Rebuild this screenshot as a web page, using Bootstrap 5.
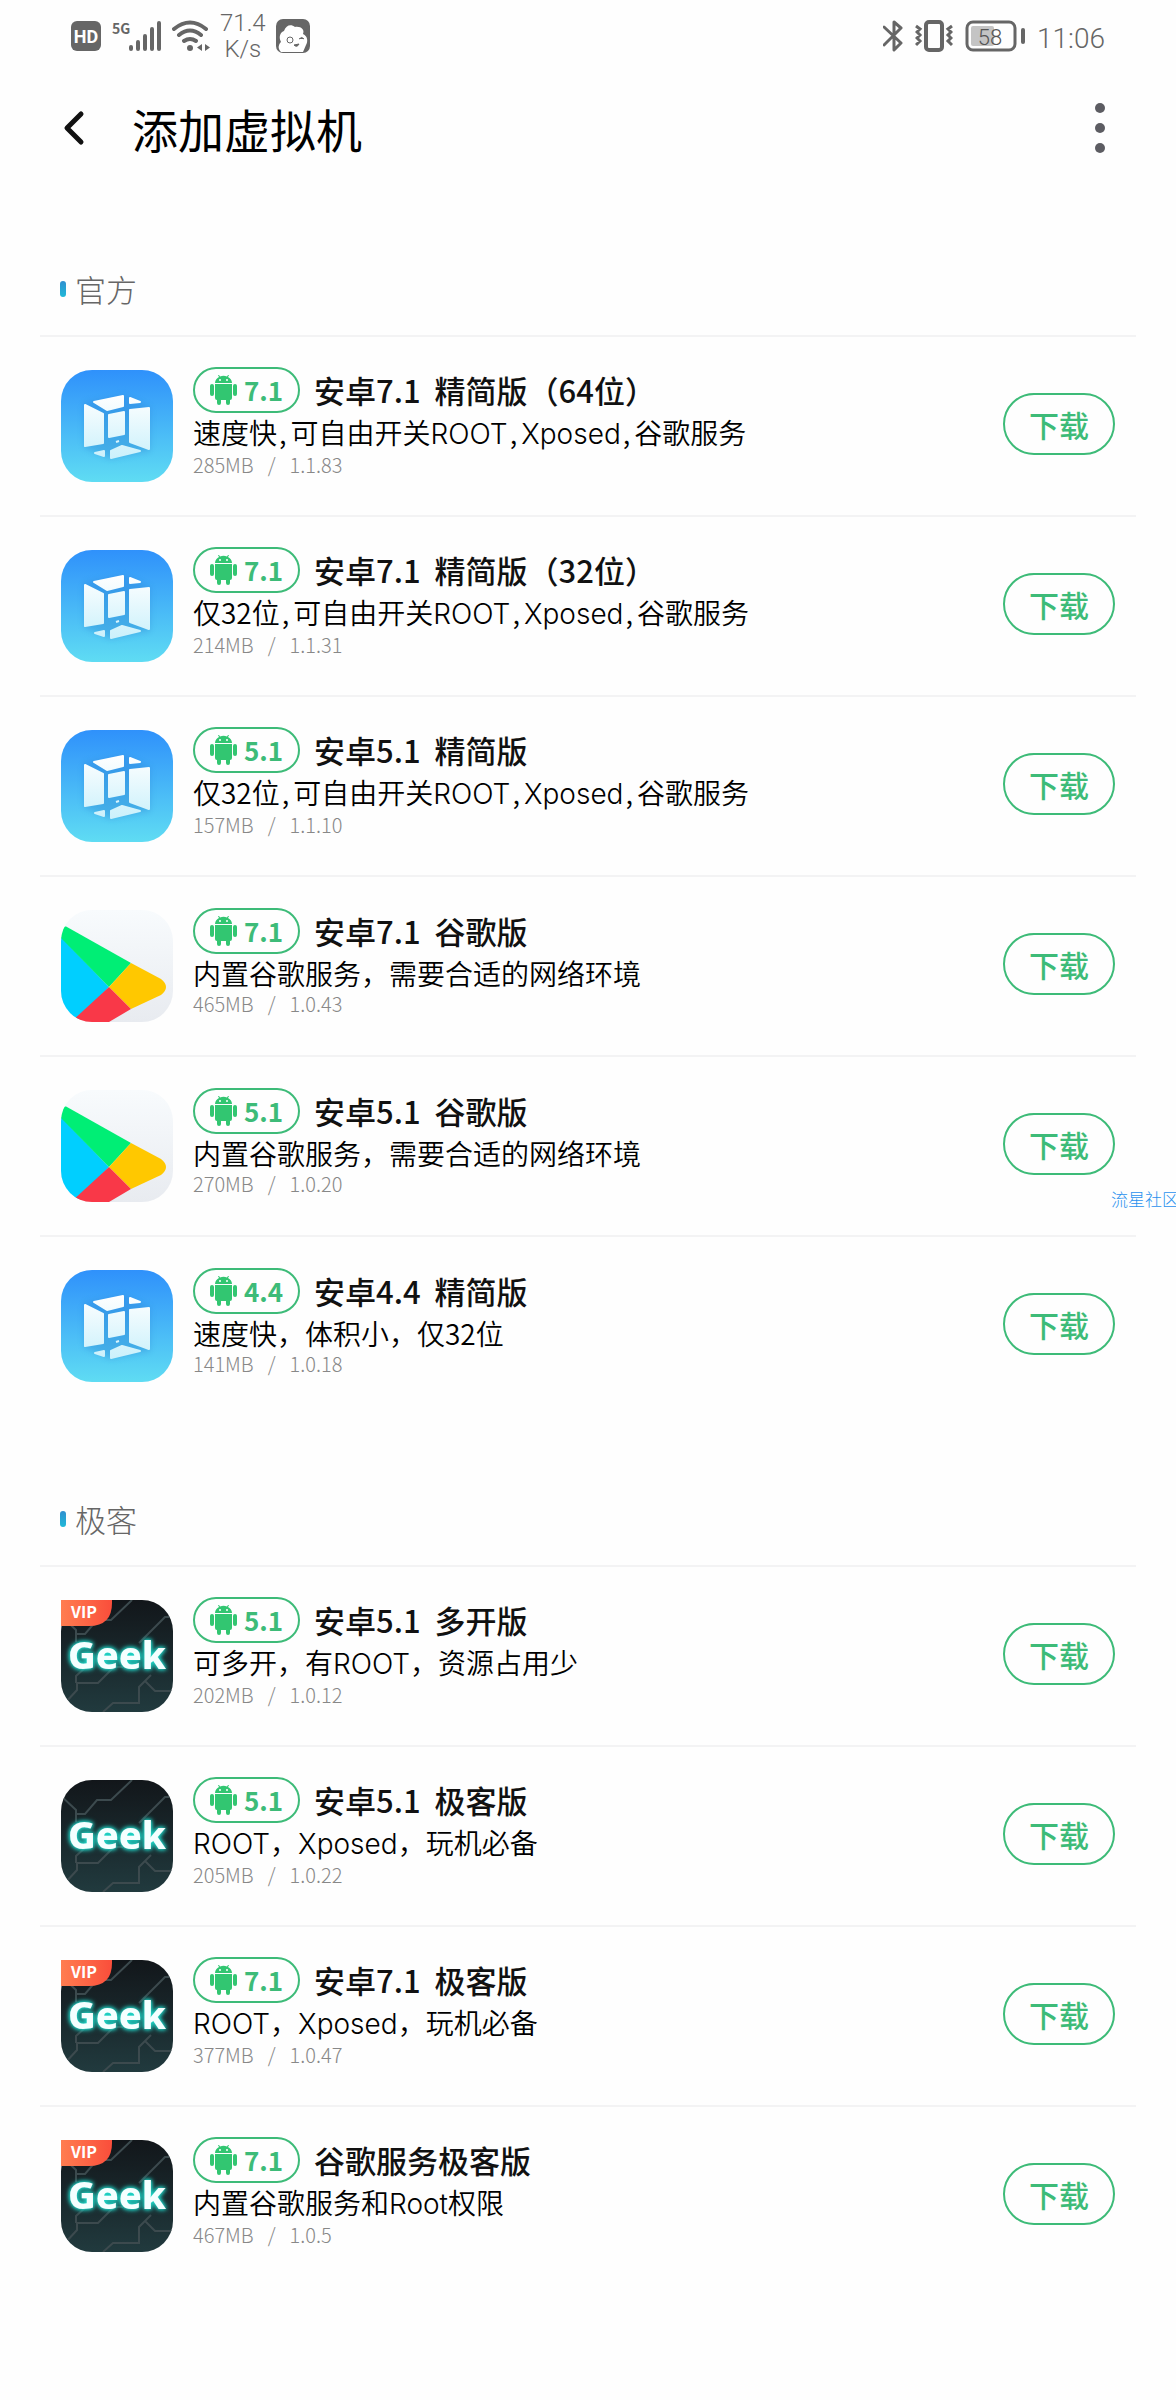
<!DOCTYPE html>
<html lang="zh-CN">
<head>
<meta charset="utf-8">
<meta name="viewport" content="width=device-width, initial-scale=1">
<title>添加虚拟机</title>
<link href="https://cdn.jsdelivr.net/npm/bootstrap@5.3.0/dist/css/bootstrap.min.css" rel="stylesheet">
<style>
:root{--vm-green:#3dbb78;--vm-grey:#666}
body{font-family:"Noto Sans CJK SC","Noto Sans",sans-serif;font-weight:300;color:#111;background:#fefefe;overflow-x:hidden}
svg{display:block;flex:none}
.status-bar{height:72px;padding:0 71px;color:var(--vm-grey);font-family:Roboto,sans-serif}
.status-left{gap:10px}
.status-right{gap:12px}
.net-speed{font-size:24px;line-height:26px}
.clock{font-size:28px;line-height:36px;padding-top:6px}
.app-bar{height:116px;padding:0 60px 4px}
.app-bar h1{font-size:46px;line-height:56px;font-weight:400;color:#000}
.icon-btn{background:none;border:0;padding:0}
.back-btn{width:72px}
.vm-section{padding:0 40px;margin-bottom:60px}
.app-bar + main{padding-top:57px}
.section-title{height:90px;padding:0 20px 2px;gap:9px;font-size:31px;font-weight:300;color:#666}
.section-title::before{content:"";width:6px;height:16px;border-radius:3px;background:linear-gradient(#2f8fd0,#20b9d8)}
.vm-item{height:180px;padding:0 21px;gap:20px;border-top:2px solid #f3f3f4}
.vm-info{padding-bottom:10px}
.vm-head{gap:14px}
.ver-pill{width:107px;height:46px;gap:7px;border:2px solid var(--vm-green);border-radius:23px;color:var(--vm-green);font-size:26px;line-height:42px;font-weight:700}
.vm-title{font-size:31px;line-height:46px;font-weight:500;gap:14px;color:#111}
.vm-desc{font-size:28px;line-height:38px;padding-bottom:2px;font-weight:350;color:#000}
.latin{font-family:Inter,sans-serif;font-weight:300}
.sep{padding:0 4px 0 2px}
.vm-meta{font-size:20px;line-height:20px;gap:14px;color:#888}
.get-btn{width:112px;height:62px;margin-bottom:4px;padding:0;border:2px solid var(--vm-green);border-radius:31px;background:none;color:var(--vm-green);font-size:30px;line-height:56px;font-weight:500}
.watermark{position:absolute;left:calc(100% - 25px);top:132px;font-size:17px;line-height:20px;color:#2a92ee;white-space:nowrap}
.neon{filter:drop-shadow(0 0 2px #1fd6c8) drop-shadow(0 0 2px #1fd6c8)}
</style>
</head>
<body>
<svg width="0" height="0" class="position-absolute" aria-hidden="true">
  <defs>
    <linearGradient id="gSky" x2="0" y2="1"><stop stop-color="#2f91fb"/><stop offset="1" stop-color="#5fdcf3"/></linearGradient>
    <linearGradient id="gPane" gradientUnits="userSpaceOnUse" x1="0" y1="25" x2="0" y2="90"><stop stop-color="#fff"/><stop offset="1" stop-color="#c9f0fb"/></linearGradient>
    <linearGradient id="gPale" x2="0" y2="1"><stop stop-color="#f8fbfd"/><stop offset="1" stop-color="#e8ebf0"/></linearGradient>
    <linearGradient id="gDark" x2="0" y2="1"><stop stop-color="#12161a"/><stop offset="1" stop-color="#213a3e"/></linearGradient>
    <linearGradient id="gVip"><stop stop-color="#ff7d50"/><stop offset="1" stop-color="#fa4e3b"/></linearGradient>
    <clipPath id="cTile"><rect width="112" height="112" rx="31"/></clipPath>
    <filter id="fShade" x="-20%" y="-20%" width="140%" height="140%"><feGaussianBlur stdDeviation="3"/></filter>
  </defs>
  <symbol id="android" viewBox="0 0 27 30">
    <g fill="#32c671"><path d="M5 8C5 5 7 3 9 2L8 0h1l1 1.500a10 10 0 0 1 7 0L18 0h1l-1 2c2 1 4 3 4 6z"/><path d="M5 9h17v14a2 2 0 0 1-2 2v3a2 2 0 0 1-4 0v-3h-5v3a2 2 0 0 1-4 0v-3a2 2 0 0 1-2-2z"/><rect y="9" width="4" height="12" rx="2"/><rect x="23" y="9" width="4" height="12" rx="2"/></g>
    <circle cx="10" cy="5" r="1" fill="#fff"/><circle cx="17" cy="5" r="1" fill="#fff"/>
  </symbol>
  <symbol id="cubes" viewBox="0 0 112 112">
    <rect width="112" height="112" rx="31" fill="url(#gSky)"/>
    <path d="M23 33 62 25 89 37v44L49 89 23 77z" fill="#2577c9" opacity=".3" filter="url(#fShade)"/>
    <g fill="url(#gPane)" stroke="url(#gPane)" stroke-width="2" stroke-linejoin="round"><path d="M33 32 62 26v10L46 40z"/><path d="M69 28 79 32 69 33z"/><path d="M24 35 42 44V73L24 76z"/><path d="M48 45 63 42V64L48 67z"/><path d="M69 40 88 38V79L69 72z"/><path d="M50 81 61 76 79 81 50 88z"/><path d="M34 83 43 81V86z"/><path d="M55 72 58 71"/></g>
  </symbol>
  <symbol id="play" viewBox="0 0 112 112">
    <rect width="112" height="112" rx="31" fill="url(#gPale)"/>
    <g clip-path="url(#cTile)"><path d="M0 27 48 77 15 112H0z" fill="#00cfff"/><path d="M0 28C0 20 2 15 6 17L70 53 48 77z" fill="#00ee75"/><path d="M70 53 100 69q10 8 0 16L70 99 48 77z" fill="#ffc800"/><path d="M48 77 70 99 48 112H10z" fill="#f93848"/></g>
  </symbol>
  <symbol id="geek" viewBox="0 0 112 112">
    <rect width="112" height="112" rx="31" fill="url(#gDark)"/>
    <g fill="none" stroke="#3c4a4e" stroke-width="2" clip-path="url(#cTile)"><path d="M71 0 50 20H36L24 34H15V42M0 16 15 30V42M112 17H104L78 43M62 67 53 67 37 83H16V90L4 103M15 83V76L24 68M42 112 52 103H78V87L90 75M84 81 94 91H112"/></g>
    <text class="neon" x="56" y="69" font-family="Noto Sans,sans-serif" font-weight="800" font-size="38" text-anchor="middle" fill="#f4ffff">Geek</text>
  </symbol>
  <symbol id="vip" viewBox="0 0 112 112">
    <path d="M0 0H51V3Q51 26 28 26H0z" fill="url(#gVip)"/>
    <text x="23" y="18" font-family="Noto Sans CJK SC,sans-serif" font-weight="700" font-size="16" text-anchor="middle" fill="#fff">VIP</text>
  </symbol>
</svg>

<div class="status-bar d-flex justify-content-between align-items-center">
  <div class="status-left d-flex align-items-center">
    <svg width="30" height="30" viewBox="0 0 30 30"><rect width="30" height="30" rx="6" fill="#666"/><text x="15" y="22" text-anchor="middle" font-size="18" font-weight="700" fill="#fff">HD</text></svg>
    <svg width="51" height="32" viewBox="0 0 51 32"><text x="1" y="14" font-family="Noto Sans CJK SC,sans-serif" font-size="14" font-weight="700" fill="#666">5G</text><g stroke="#666" stroke-width="4" stroke-linecap="round"><path d="M20 27v2M27 22v7M34 16v13M41 9v20M48 3v26"/></g></svg>
    <svg width="38" height="32" viewBox="0 0 38 32"><g fill="none" stroke="#666" stroke-width="4" stroke-linecap="round"><path d="M2 9q16-13 32 0M7 15q11-9 22 0M12 21q6-4 12 0"/></g><circle cx="18" cy="28" r="3" fill="#666"/><path d="M30 24v7l-5-3.500zM33 24v7l5-3.500z" fill="#666"/></svg>
    <div class="net-speed text-center">71.4<br>K/s</div>
    <svg width="34" height="34" viewBox="0 0 34 34"><rect width="34" height="34" rx="7" fill="#666"/><path d="M5 33C1 29 3 25 5 23 2 17 5 13 8 12 10 6 15 5 19 8 25 7 29 11 27 15 32 17 32 23 30 26L27 33z" fill="#fff"/><circle cx="14" cy="21" r="3" fill="none" stroke="#666"/><path d="M23 20q3-3 5 0M18 26q3 3 5-1z" fill="#666" stroke="#666"/></svg>
  </div>
  <div class="status-right d-flex align-items-center">
    <svg width="20" height="34" viewBox="0 0 20 34" fill="none" stroke="#666" stroke-width="3" stroke-linejoin="round" stroke-linecap="round"><path d="M1 8 18 24 11 31V3L18 9 1 26"/></svg>
    <svg width="38" height="32" viewBox="0 0 38 32" fill="none" stroke="#666" stroke-width="3"><rect x="11" y="2" width="16" height="28" rx="3" stroke-width="4"/><path d="M1 6 5 9 2 12 5 15 2 18 5 21 1 25M37 6 33 9 36 12 33 15 36 18 33 21 37 25"/></svg>
    <svg width="60" height="32" viewBox="0 0 60 32"><rect x="2" y="2" width="48" height="28" rx="6" fill="none" stroke="#666" stroke-width="3"/><rect x="6" y="6" width="23" height="20" rx="2" fill="#c4c4c4"/><rect x="56" y="8" width="4" height="16" rx="2" fill="#666"/><text x="25" y="25" text-anchor="middle" font-size="22" font-weight="300" fill="#555">58</text></svg>
    <div class="clock">11:06</div>
  </div>
</div>

<header class="app-bar d-flex align-items-center">
  <button class="icon-btn back-btn" type="button" aria-label="返回"><svg width="28" height="36" viewBox="0 0 28 36"><path d="M21 4 7 18 21 32" fill="none" stroke="#111" stroke-width="5" stroke-linecap="round" stroke-linejoin="round"/></svg></button>
  <h1 class="m-0 flex-grow-1">添加虚拟机</h1>
  <button class="icon-btn" type="button" aria-label="更多"><svg width="32" height="52" viewBox="0 0 32 52" fill="#5c5c62"><circle cx="16" cy="6" r="5"/><circle cx="16" cy="26" r="5"/><circle cx="16" cy="46" r="5"/></svg></button>
</header>

<main>
<section class="vm-section">
  <h2 class="section-title d-flex align-items-center m-0">官方</h2>
  <article class="vm-item d-flex align-items-center">
    <svg width="112" height="112"><use href="#cubes"/></svg>
    <div class="vm-info flex-grow-1">
      <div class="vm-head d-flex"><span class="ver-pill d-flex align-items-center justify-content-center"><svg width="27" height="30"><use href="#android"/></svg>7.1</span><div class="vm-title d-flex"><span>安卓7.1</span> <span>精简版（64位）</span></div></div>
      <div class="vm-desc">速度快<span class="sep">,</span>可自由开关<span class="latin">ROOT</span><span class="sep">,</span><span class="latin">Xposed</span><span class="sep">,</span>谷歌服务</div>
      <div class="vm-meta d-flex"><span>285MB</span> <span>/</span> <span>1.1.83</span></div>
    </div>
    <button class="get-btn" type="button">下载</button>
  </article>
  <article class="vm-item d-flex align-items-center">
    <svg width="112" height="112"><use href="#cubes"/></svg>
    <div class="vm-info flex-grow-1">
      <div class="vm-head d-flex"><span class="ver-pill d-flex align-items-center justify-content-center"><svg width="27" height="30"><use href="#android"/></svg>7.1</span><div class="vm-title d-flex"><span>安卓7.1</span> <span>精简版（32位）</span></div></div>
      <div class="vm-desc">仅32位<span class="sep">,</span>可自由开关<span class="latin">ROOT</span><span class="sep">,</span><span class="latin">Xposed</span><span class="sep">,</span>谷歌服务</div>
      <div class="vm-meta d-flex"><span>214MB</span> <span>/</span> <span>1.1.31</span></div>
    </div>
    <button class="get-btn" type="button">下载</button>
  </article>
  <article class="vm-item d-flex align-items-center">
    <svg width="112" height="112"><use href="#cubes"/></svg>
    <div class="vm-info flex-grow-1">
      <div class="vm-head d-flex"><span class="ver-pill d-flex align-items-center justify-content-center"><svg width="27" height="30"><use href="#android"/></svg>5.1</span><div class="vm-title d-flex"><span>安卓5.1</span> <span>精简版</span></div></div>
      <div class="vm-desc">仅32位<span class="sep">,</span>可自由开关<span class="latin">ROOT</span><span class="sep">,</span><span class="latin">Xposed</span><span class="sep">,</span>谷歌服务</div>
      <div class="vm-meta d-flex"><span>157MB</span> <span>/</span> <span>1.1.10</span></div>
    </div>
    <button class="get-btn" type="button">下载</button>
  </article>
  <article class="vm-item d-flex align-items-center">
    <svg width="112" height="112"><use href="#play"/></svg>
    <div class="vm-info flex-grow-1">
      <div class="vm-head d-flex"><span class="ver-pill d-flex align-items-center justify-content-center"><svg width="27" height="30"><use href="#android"/></svg>7.1</span><div class="vm-title d-flex"><span>安卓7.1</span> <span>谷歌版</span></div></div>
      <div class="vm-desc">内置谷歌服务，需要合适的网络环境</div>
      <div class="vm-meta d-flex"><span>465MB</span> <span>/</span> <span>1.0.43</span></div>
    </div>
    <button class="get-btn" type="button">下载</button>
  </article>
  <article class="vm-item d-flex align-items-center position-relative">
    <svg width="112" height="112"><use href="#play"/></svg>
    <div class="vm-info flex-grow-1">
      <div class="vm-head d-flex"><span class="ver-pill d-flex align-items-center justify-content-center"><svg width="27" height="30"><use href="#android"/></svg>5.1</span><div class="vm-title d-flex"><span>安卓5.1</span> <span>谷歌版</span></div></div>
      <div class="vm-desc">内置谷歌服务，需要合适的网络环境</div>
      <div class="vm-meta d-flex"><span>270MB</span> <span>/</span> <span>1.0.20</span></div>
    </div>
    <button class="get-btn" type="button">下载</button>
    <span class="watermark">流星社区</span>
  </article>
  <article class="vm-item d-flex align-items-center">
    <svg width="112" height="112"><use href="#cubes"/></svg>
    <div class="vm-info flex-grow-1">
      <div class="vm-head d-flex"><span class="ver-pill d-flex align-items-center justify-content-center"><svg width="27" height="30"><use href="#android"/></svg>4.4</span><div class="vm-title d-flex"><span>安卓4.4</span> <span>精简版</span></div></div>
      <div class="vm-desc">速度快，体积小，仅32位</div>
      <div class="vm-meta d-flex"><span>141MB</span> <span>/</span> <span>1.0.18</span></div>
    </div>
    <button class="get-btn" type="button">下载</button>
  </article>
</section>

<section class="vm-section">
  <h2 class="section-title d-flex align-items-center m-0">极客</h2>
  <article class="vm-item d-flex align-items-center">
    <svg width="112" height="112"><use href="#geek"/><use href="#vip"/></svg>
    <div class="vm-info flex-grow-1">
      <div class="vm-head d-flex"><span class="ver-pill d-flex align-items-center justify-content-center"><svg width="27" height="30"><use href="#android"/></svg>5.1</span><div class="vm-title d-flex"><span>安卓5.1</span> <span>多开版</span></div></div>
      <div class="vm-desc">可多开，有<span class="latin">ROOT</span>，资源占用少</div>
      <div class="vm-meta d-flex"><span>202MB</span> <span>/</span> <span>1.0.12</span></div>
    </div>
    <button class="get-btn" type="button">下载</button>
  </article>
  <article class="vm-item d-flex align-items-center">
    <svg width="112" height="112"><use href="#geek"/></svg>
    <div class="vm-info flex-grow-1">
      <div class="vm-head d-flex"><span class="ver-pill d-flex align-items-center justify-content-center"><svg width="27" height="30"><use href="#android"/></svg>5.1</span><div class="vm-title d-flex"><span>安卓5.1</span> <span>极客版</span></div></div>
      <div class="vm-desc"><span class="latin">ROOT</span>，<span class="latin">Xposed</span>，玩机必备</div>
      <div class="vm-meta d-flex"><span>205MB</span> <span>/</span> <span>1.0.22</span></div>
    </div>
    <button class="get-btn" type="button">下载</button>
  </article>
  <article class="vm-item d-flex align-items-center">
    <svg width="112" height="112"><use href="#geek"/><use href="#vip"/></svg>
    <div class="vm-info flex-grow-1">
      <div class="vm-head d-flex"><span class="ver-pill d-flex align-items-center justify-content-center"><svg width="27" height="30"><use href="#android"/></svg>7.1</span><div class="vm-title d-flex"><span>安卓7.1</span> <span>极客版</span></div></div>
      <div class="vm-desc"><span class="latin">ROOT</span>，<span class="latin">Xposed</span>，玩机必备</div>
      <div class="vm-meta d-flex"><span>377MB</span> <span>/</span> <span>1.0.47</span></div>
    </div>
    <button class="get-btn" type="button">下载</button>
  </article>
  <article class="vm-item d-flex align-items-center">
    <svg width="112" height="112"><use href="#geek"/><use href="#vip"/></svg>
    <div class="vm-info flex-grow-1">
      <div class="vm-head d-flex"><span class="ver-pill d-flex align-items-center justify-content-center"><svg width="27" height="30"><use href="#android"/></svg>7.1</span><div class="vm-title d-flex"><span>谷歌服务极客版</span></div></div>
      <div class="vm-desc">内置谷歌服务和<span class="latin">Root</span>权限</div>
      <div class="vm-meta d-flex"><span>467MB</span> <span>/</span> <span>1.0.5</span></div>
    </div>
    <button class="get-btn" type="button">下载</button>
  </article>
</section>
</main>
<script src="https://cdn.jsdelivr.net/npm/bootstrap@5.3.0/dist/js/bootstrap.bundle.min.js"></script>
</body>
</html>
